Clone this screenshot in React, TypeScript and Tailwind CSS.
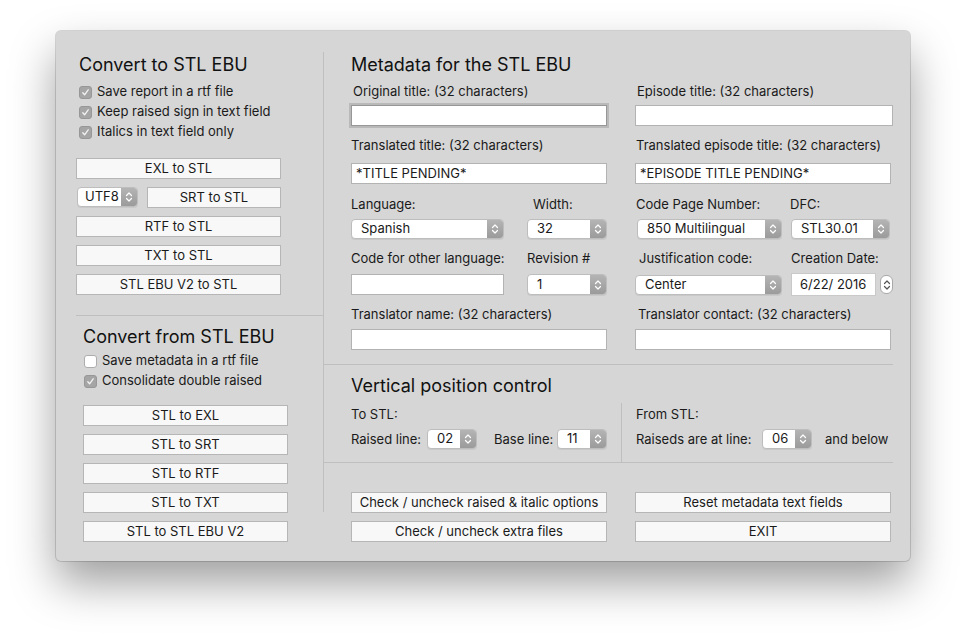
import React from 'react';

const FONT = { fontFamily: 'Inter, "Liberation Sans", Arial, sans-serif' };

const Chevrons: React.FC<{ dark?: boolean }> = ({ dark }) => (
  <svg width="8" height="12" viewBox="0 0 8 12" fill="none">
    <path d="M1.5 4.5 L4 2 L6.5 4.5" stroke={dark ? '#555' : '#fff'} strokeWidth="1.2" strokeLinecap="round" strokeLinejoin="round" />
    <path d="M1.5 7.5 L4 10 L6.5 7.5" stroke={dark ? '#555' : '#fff'} strokeWidth="1.2" strokeLinecap="round" strokeLinejoin="round" />
  </svg>
);

const Popup: React.FC<{ value: string; className?: string; pad?: string }> = ({ value, className = '', pad = 'pl-[9px]' }) => (
  <div className={`flex h-[20px] rounded-[4px] bg-white border border-[#bdbdbd] shadow-[0_1px_0_rgba(0,0,0,0.06)] overflow-hidden ${className}`}>
    <div className={`flex-1 flex items-center ${pad} text-[13px] text-[#1a1a1a] whitespace-nowrap`}>{value}</div>
    <div className="w-[16px] flex items-center justify-center bg-gradient-to-b from-[#b4b4b4] to-[#9b9b9b]">
      <Chevrons />
    </div>
  </div>
);

const Button: React.FC<{ label: string; className?: string }> = ({ label, className = '' }) => (
  <button className={`h-[21px] bg-[#f8f8f8] border border-[#b6b6b6] text-[13px] text-[#1a1a1a] leading-none whitespace-nowrap ${className}`}>
    {label}
  </button>
);

const Field: React.FC<{ value?: string; focused?: boolean; className?: string }> = ({ value = '', focused, className = '' }) => (
  <div
    className={`h-[21px] bg-white flex items-center pl-[4px] text-[13px] text-[#1a1a1a] ${
      focused ? 'border border-[#979797] shadow-[0_0_0_2px_#b9b9b9]' : 'border border-[#b3b3b3]'
    } ${className}`}
  >
    {value}
  </div>
);

const Check: React.FC<{ label: string; checked?: boolean }> = ({ label, checked = true }) => (
  <div className="h-[20px] flex items-center gap-[5px]">
    {checked ? (
      <div className="w-[13px] h-[13px] rounded-[3px] bg-[#a5a5a5] border border-[#979797] flex items-center justify-center">
        <svg width="9" height="9" viewBox="0 0 9 9" fill="none">
          <path d="M1.8 4.8 L3.6 6.8 L7.2 1.8" stroke="#f2f2f2" strokeWidth="1.3" strokeLinecap="round" strokeLinejoin="round" />
        </svg>
      </div>
    ) : (
      <div className="w-[13px] h-[13px] rounded-[3px] bg-white border border-[#adadad]" />
    )}
    <span className="text-[13px] text-[#1a1a1a]">{label}</span>
  </div>
);

const Label: React.FC<{ children: React.ReactNode; className?: string }> = ({ children, className = '' }) => (
  <div className={`text-[13px] leading-[16px] text-[#1a1a1a] whitespace-nowrap ${className}`}>{children}</div>
);

const Title: React.FC<{ children: React.ReactNode; className?: string }> = ({ children, className = '' }) => (
  <div className={`text-[18px] leading-[22px] text-[#111] ${className}`}>{children}</div>
);

export default function App() {
  return (
    <div className="w-[966px] h-[642px] bg-white pt-[31px] pl-[56px]" style={FONT}>
      <div className="w-[854px] h-[530px] rounded-[5px] bg-[#d6d6d6] flex shadow-[0_22px_45px_rgba(0,0,0,0.38),0_0_0_1px_rgba(0,0,0,0.14)]">
        {/* left: conversion buttons */}
        <div className="w-[267px] flex flex-col">
          <Title className="mt-[23px] pl-[23px]">Convert to STL EBU</Title>
          <div className="mt-[6px] pl-[23px] flex flex-col">
            <Check label="Save report in a rtf file" />
            <Check label="Keep raised sign in text field" />
            <Check label="Italics in text field only" />
          </div>
          <div className="mt-[16px] ml-[20px] w-[205px] flex flex-col gap-[8px]">
            <Button label="EXL to STL" />
            <div className="flex gap-[9px]">
              <Popup value="UTF8" pad="pl-[7px]" className="w-[61px] ml-[1px]" />
              <Button label="SRT to STL" className="flex-1" />
            </div>
            <Button label="RTF to STL" />
            <Button label="TXT to STL" />
            <Button label="STL EBU V2 to STL" />
          </div>
          <div className="mt-[20px] ml-[20px] h-px bg-[#bfbfbf]" />
          <Title className="mt-[10px] pl-[27px]">Convert from STL EBU</Title>
          <div className="mt-[3px] pl-[28px] flex flex-col">
            <Check label="Save metadata in a rtf file" checked={false} />
            <Check label="Consolidate double raised" />
          </div>
          <div className="mt-[14px] ml-[27px] w-[205px] flex flex-col gap-[8px]">
            <Button label="STL to EXL" />
            <Button label="STL to SRT" />
            <Button label="STL to RTF" />
            <Button label="STL to TXT" />
            <Button label="STL to STL EBU V2" />
          </div>
        </div>

        <div className="w-px h-[460px] mt-[21px] bg-[#bfbfbf]" />

        {/* right: metadata */}
        <div className="flex-1 flex flex-col">
          <Title className="mt-[23px] pl-[27px]">Metadata for the STL EBU</Title>
          <div className="pl-[27px] grid grid-cols-[256px_258px] gap-x-[28px]">
            <div className="flex flex-col">
              <Label className="mt-[7px] pl-[2px]">Original title: (32 characters)</Label>
              <Field focused className="mt-[6px]" />
              <Label className="mt-[11px]">Translated title: (32 characters)</Label>
              <Field value="*TITLE PENDING*" className="mt-[10px]" />
              <div className="mt-[12px] flex">
                <Label className="w-[182px]">Language:</Label>
                <Label>Width:</Label>
              </div>
              <div className="mt-[7px] flex gap-[23px]">
                <Popup value="Spanish" className="w-[153px]" />
                <Popup value="32" className="w-[80px]" />
              </div>
              <div className="mt-[11px] flex">
                <Label className="w-[176px]">Code for other language:</Label>
                <Label>Revision #</Label>
              </div>
              <div className="mt-[8px] flex gap-[23px]">
                <Field className="w-[153px]" />
                <Popup value="1" className="w-[80px] h-[21px]" />
              </div>
              <Label className="mt-[11px]">Translator name: (32 characters)</Label>
              <Field className="mt-[7px]" />
            </div>
            <div className="flex flex-col">
              <Label className="mt-[7px] pl-[2px]">Episode title: (32 characters)</Label>
              <Field className="mt-[6px]" />
              <Label className="mt-[11px] pl-[1px]">Translated episode title: (32 characters)</Label>
              <Field value="*EPISODE TITLE PENDING*" className="mt-[10px] w-[256px]" />
              <div className="mt-[12px] flex">
                <Label className="w-[155px] pl-[1px]">Code Page Number:</Label>
                <Label>DFC:</Label>
              </div>
              <div className="mt-[7px] flex">
                <Popup value="850 Multilingual" className="w-[145px] ml-[2px]" />
                <Popup value="STL30.01" className="w-[99px] ml-[9px]" />
              </div>
              <div className="mt-[11px] flex">
                <Label className="w-[156px] pl-[4px]">Justification code:</Label>
                <Label>Creation Date:</Label>
              </div>
              <div className="mt-[8px] h-[21px] flex items-center">
                <Popup value="Center" className="w-[147px]" />
                <div className="ml-[9px] w-[85px] h-[23px] shrink-0 bg-white border border-[#c9c9c9] flex items-center pl-[8px] text-[13px] text-[#1a1a1a]">
                  6/22/ 2016
                </div>
                <div className="ml-[4px] w-[13px] h-[19px] rounded-[6px] bg-white border border-[#a9a9a9] flex items-center justify-center">
                  <Chevrons dark />
                </div>
              </div>
              <Label className="mt-[11px] pl-[3px]">Translator contact: (32 characters)</Label>
              <Field className="mt-[7px] w-[256px]" />
            </div>
          </div>

          <div className="mt-[14px] mr-[17px] h-px bg-[#bfbfbf]" />
          <Title className="mt-[10px] pl-[27px]">Vertical position control</Title>
          <div className="mt-[6px] mr-[17px] h-[60px] flex border-b border-[#bfbfbf]">
            <div className="w-[298px] pl-[27px] border-r border-[#bfbfbf] flex flex-col">
              <Label className="mt-[3px]">To STL:</Label>
              <div className="mt-[7px] flex items-center">
                <Label className="w-[76px]">Raised line:</Label>
                <Popup value="02" className="w-[50px]" />
                <Label className="ml-[17px] w-[63px]">Base line:</Label>
                <Popup value="11" className="w-[50px]" />
              </div>
            </div>
            <div className="flex-1 pl-[14px] flex flex-col">
              <Label className="mt-[3px]">From STL:</Label>
              <div className="mt-[7px] flex items-center">
                <Label className="w-[126px]">Raiseds are at line:</Label>
                <Popup value="06" className="w-[50px]" />
                <Label className="ml-[13px]">and below</Label>
              </div>
            </div>
          </div>

          <div className="mt-[29px] pl-[27px] grid grid-cols-[256px_256px] gap-x-[28px] gap-y-[8px]">
            <Button label="Check / uncheck raised & italic options" />
            <Button label="Reset metadata text fields" />
            <Button label="Check / uncheck extra files" />
            <Button label="EXIT" />
          </div>
        </div>
      </div>
    </div>
  );
}
